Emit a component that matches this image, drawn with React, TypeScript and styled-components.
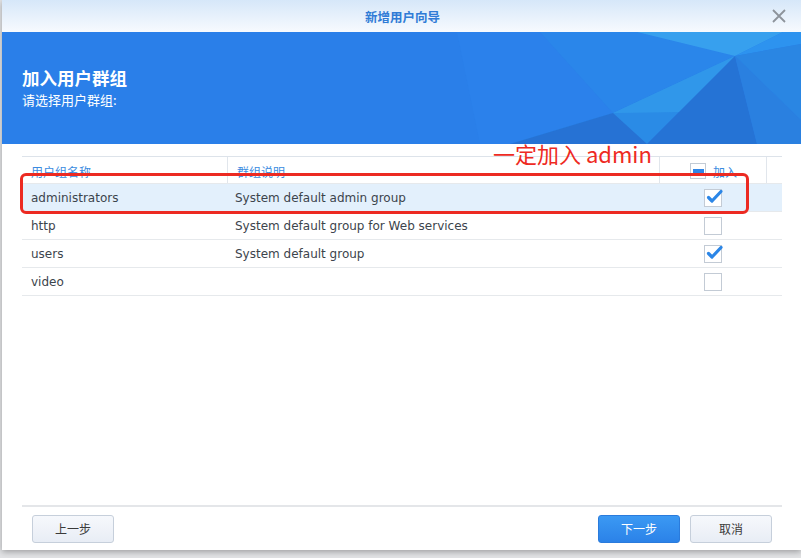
import React from "react";
import styled, { createGlobalStyle } from "styled-components";

type Group = {
    name: string;
    description: string;
    checked: boolean;
    highlighted?: boolean;
};

const groups: Array<Group> = [
    {
        name: "administrators",
        description: "System default admin group",
        checked: true,
        highlighted: true,
    },
    {
        name: "http",
        description: "System default group for Web services",
        checked: false,
    },
    { name: "users", description: "System default group", checked: true },
    { name: "video", description: "", checked: false },
];

const GlobalStyle = createGlobalStyle`
    html, body {
        margin: 0;
        padding: 0;
        background: #e2e3e5;
        font-family: "DejaVu Sans", "Noto Sans CJK SC", sans-serif;
        overflow: hidden;
    }
`;

const Page = styled.div`
    width: 801px;
    height: 558px;
    display: flex;
    padding-left: 2px;
    box-sizing: border-box;
`;

const Window = styled.div`
    width: 799px;
    height: 550px;
    background: #fff;
    display: flex;
    flex-direction: column;
    box-shadow: 0 2px 6px rgba(0, 0, 0, 0.3);
`;

const TitleBar = styled.div`
    height: 32px;
    flex-shrink: 0;
    background: linear-gradient(#d6e7f9, #f7fafe);
    display: flex;
    align-items: center;
    justify-content: center;
    position: relative;
`;

const TitleText = styled.span`
    font-family: "Noto Sans CJK SC", sans-serif;
    font-size: 12.5px;
    font-weight: 700;
    color: #2f7bd6;
    margin-left: 2px;
`;

const CloseButton = styled.span`
    position: absolute;
    right: 15px;
    top: 9px;
    width: 14px;
    height: 14px;
    display: flex;
`;

const Banner = styled.div`
    height: 112px;
    flex-shrink: 0;
    background: #2a7fe9;
    position: relative;
    overflow: hidden;
    display: flex;
    flex-direction: column;
    justify-content: center;
    padding: 0 20px;
    box-sizing: border-box;
`;

const BannerArt = styled.svg`
    position: absolute;
    left: 0;
    top: 0;
`;

const BannerTitle = styled.div`
    font-family: "Noto Sans CJK SC", sans-serif;
    font-size: 17.5px;
    font-weight: 700;
    color: #fff;
    line-height: 24px;
    position: relative;
`;

const BannerSub = styled.div`
    font-family: "Noto Sans CJK SC", sans-serif;
    font-size: 13px;
    color: #fff;
    line-height: 20px;
    position: relative;
`;

const Content = styled.div`
    flex: 1;
    padding: 12px 19px 0 20px;
`;

const TableWrap = styled.div`
    position: relative;
    border-top: 1px solid #dde3ea;
`;

const Row = styled.div<{ $highlighted?: boolean; $header?: boolean }>`
    display: grid;
    grid-template-columns: 205px 432px 107px 16px;
    height: ${({ $header }) => ($header ? "26px" : "27px")};
    border-bottom: 1px solid #e6e9ec;
    background: ${({ $highlighted }) => ($highlighted ? "#e3f0fc" : "#fff")};
`;

const HeaderCell = styled.div<{ $divider?: boolean }>`
    display: flex;
    align-items: center;
    padding-left: 9px;
    padding-top: 2px;
    font-family: "Noto Sans CJK SC", sans-serif;
    font-size: 12px;
    color: #3a8be0;
    border-left: ${({ $divider }) => ($divider ? "1px solid #e1e6ec" : "none")};
`;

const HeaderCheckCell = styled(HeaderCell)`
    padding-left: 30px;
    gap: 7px;
`;

const Cell = styled.div`
    display: flex;
    align-items: center;
    padding-left: 9px;
    font-size: 12px;
    color: #3c444c;
`;

const DescCell = styled(Cell)`
    padding-left: 8px;
`;

const CheckCell = styled.div`
    display: flex;
    align-items: center;
    justify-content: center;
    padding-left: 1px;
`;

const Box = styled.span<{ $size: number }>`
    width: ${({ $size }) => $size}px;
    height: ${({ $size }) => $size}px;
    box-sizing: border-box;
    border: 1px solid #c3cbd5;
    background: #fff;
    position: relative;
    display: flex;
    align-items: center;
    justify-content: center;
`;

const Minus = styled.span`
    width: 11px;
    height: 4px;
    background: #2f86e8;
`;

const CheckMark = styled.svg`
    position: absolute;
    left: 1px;
    top: -2px;
    overflow: visible;
`;

const Annotation = styled.div`
    position: absolute;
    left: -2px;
    top: 16px;
    width: 729px;
    height: 41px;
    border: 3px solid #ec2a22;
    border-radius: 6px;
    box-sizing: border-box;
    pointer-events: none;
`;

const AnnotationText = styled.div`
    position: absolute;
    left: 471px;
    top: -18px;
    font-family: "Noto Sans CJK SC", sans-serif;
    font-size: 22px;
    line-height: 28px;
    color: #ee2a22;
    white-space: nowrap;
`;

const Footer = styled.div`
    margin: 0 19px 0 20px;
    border-top: 2px solid #e4e6e9;
    height: 43px;
    display: flex;
    align-items: center;
    padding: 0 10px;
    gap: 10px;
`;

const Spacer = styled.div`
    flex: 1;
`;

const Button = styled.button<{ $primary?: boolean }>`
    width: 82px;
    height: 28px;
    border-radius: 3px;
    font-family: "Noto Sans CJK SC", sans-serif;
    font-size: 12px;
    border: 1px solid ${({ $primary }) => ($primary ? "#2a7bdc" : "#c6cfdb")};
    color: ${({ $primary }) => ($primary ? "#fff" : "#3a3a3a")};
    background: ${({ $primary }) =>
        $primary
            ? "linear-gradient(#3b99f3, #2b82e8)"
            : "linear-gradient(#f6f8fc, #e8edf5)"};
    padding: 0;
`;

const Check = () => (
    <CheckMark width="16" height="16" viewBox="0 0 16 16" aria-hidden>
        <path
            d="M2.5 9.5 L6 13 L15 3.5"
            fill="none"
            stroke="#2b86e7"
            strokeWidth="3.2"
            strokeLinecap="round"
            strokeLinejoin="round"
        />
    </CheckMark>
);

const App: React.FC = () => {
    return (
        <Page>
            <GlobalStyle />
            <Window>
                <TitleBar>
                    <TitleText>新增用户向导</TitleText>
                    <CloseButton>
                        <svg width="14" height="14" viewBox="0 0 14 14">
                            <path
                                d="M1 1 L13 13 M13 1 L1 13"
                                stroke="#8d939b"
                                strokeWidth="1.8"
                            />
                        </svg>
                    </CloseButton>
                </TitleBar>
                <Banner>
                    <BannerArt width="799" height="112" viewBox="0 0 799 112">
                        <polygon points="455,0 538,0 611,81 508,112 478,112" fill="#2c83ee" opacity="0.5" />
                        <polygon points="538,0 635,0 733,24 611,81" fill="#2a86ea" />
                        <polygon points="635,0 781,0 733,24" fill="#37a0ee" />
                        <polygon points="781,0 799,0 799,12 733,24" fill="#2d93ef" />
                        <polygon points="733,24 799,12 799,88" fill="#2a86e3" />
                        <polygon points="611,81 733,24 645,112 508,112" fill="#2a8be6" />
                        <polygon points="611,81 733,24 680,80" fill="#35a0ec" opacity="0.6" />
                        <polygon points="733,24 755,112 645,112" fill="#2573d5" />
                        <polygon points="733,24 799,88 799,112 755,112" fill="#2a80e0" />
                        <polygon points="508,112 611,81 645,112" fill="#256bcf" opacity="0.8" />
                    </BannerArt>
                    <BannerTitle>加入用户群组</BannerTitle>
                    <BannerSub>请选择用户群组:</BannerSub>
                </Banner>
                <Content>
                    <TableWrap>
                        <Row $header>
                            <HeaderCell>用户组名称</HeaderCell>
                            <HeaderCell $divider>群组说明</HeaderCell>
                            <HeaderCheckCell $divider>
                                <Box $size={16}>
                                    <Minus />
                                </Box>
                                加入
                            </HeaderCheckCell>
                            <HeaderCell $divider />
                        </Row>
                        {groups.map((g) => (
                            <Row key={g.name} $highlighted={g.highlighted}>
                                <Cell>{g.name}</Cell>
                                <DescCell>{g.description}</DescCell>
                                <CheckCell>
                                    <Box $size={18}>{g.checked && <Check />}</Box>
                                </CheckCell>
                                <div />
                            </Row>
                        ))}
                        <Annotation />
                        <AnnotationText>一定加入 admin</AnnotationText>
                    </TableWrap>
                </Content>
                <Footer>
                    <Button>上一步</Button>
                    <Spacer />
                    <Button $primary>下一步</Button>
                    <Button>取消</Button>
                </Footer>
            </Window>
        </Page>
    );
};

export default App;
